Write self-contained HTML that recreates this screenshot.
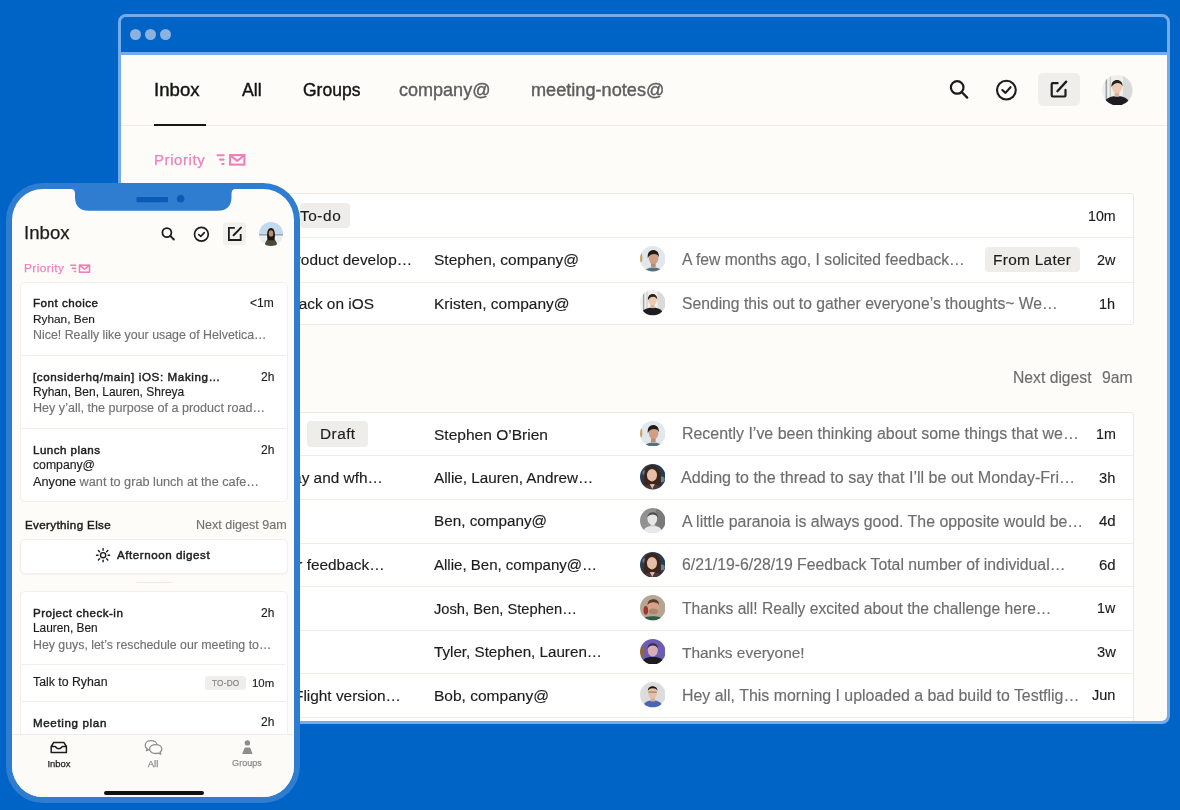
<!DOCTYPE html>
<html><head><meta charset="utf-8">
<style>
*{margin:0;padding:0;box-sizing:border-box}
html,body{width:1180px;height:810px;overflow:hidden;background:#0064c6;font-family:"Liberation Sans",sans-serif;color:#1c1c1c}
.a{position:absolute}
.t{position:absolute;white-space:nowrap;will-change:transform}
</style></head><body>
<div class="a" style="left:118.00px;top:14.00px;width:1052.00px;height:710.00px;border:3px solid #74abea;border-radius:8px;background:#0064c6;"></div>
<div class="a" style="left:121.00px;top:52.00px;width:1046.00px;height:3.00px;background:#74abea;"></div>
<div class="a" style="left:129.50px;top:28.50px;width:11.00px;height:11.00px;border-radius:50%;background:#8db1de;"></div>
<div class="a" style="left:144.50px;top:28.50px;width:11.00px;height:11.00px;border-radius:50%;background:#8db1de;"></div>
<div class="a" style="left:160.00px;top:28.50px;width:11.00px;height:11.00px;border-radius:50%;background:#8db1de;"></div>
<div class="a" style="left:121px;top:55px;width:1046px;height:666px;overflow:hidden;background:#fdfcf9;border-radius:0 0 5px 5px">
<div class="a" style="left:-121px;top:-55px;width:1180px;height:810px">
<div class="t " style="top:79.14px;font-size:18.64px;line-height:22px;left:153.60px;color:#141414;-webkit-text-stroke:0.4px currentColor;">Inbox</div>
<div class="t " style="top:79.96px;font-size:17.73px;line-height:21px;left:242.30px;color:#141414;-webkit-text-stroke:0.4px currentColor;">All</div>
<div class="t " style="top:80.03px;font-size:17.51px;line-height:21px;left:303.30px;color:#141414;-webkit-text-stroke:0.4px currentColor;">Groups</div>
<div class="t " style="top:79.35px;font-size:18.04px;line-height:22px;left:399.30px;color:#5e5e5e;-webkit-text-stroke:0.4px currentColor;">company@</div>
<div class="t " style="top:79.31px;font-size:18.15px;line-height:22px;left:530.60px;color:#5e5e5e;-webkit-text-stroke:0.4px currentColor;">meeting-notes@</div>
<div class="a" style="left:121.00px;top:124.60px;width:1046.00px;height:1.00px;background:#eeeae5;"></div>
<div class="a" style="left:154.00px;top:124.20px;width:52.00px;height:2.10px;background:#161616;"></div>
<div class="a" style="left:1037.50px;top:72.80px;width:42.70px;height:33.60px;background:#efeeeb;border-radius:5px;"></div>
<svg class="a" style="left:940px;top:70px" width="200" height="40" viewBox="940 70 200 40">
<circle cx="957.2" cy="87.4" r="6.3" fill="none" stroke="#1c1c1c" stroke-width="2.2"/>
<line x1="961.9" y1="92.2" x2="967.2" y2="97.6" stroke="#1c1c1c" stroke-width="2.3" stroke-linecap="round"/>
<circle cx="1006.4" cy="90.1" r="9.4" fill="none" stroke="#1c1c1c" stroke-width="2.1"/>
<polyline points="1002.3,90 1005.5,92.9 1010.5,87.2" fill="none" stroke="#1c1c1c" stroke-width="2.1" stroke-linecap="round" stroke-linejoin="round"/>
<path d="M1057.6 83.2 H1052.6 Q1051.7 83.2 1051.7 84.1 V95.6 Q1051.7 96.5 1052.6 96.5 H1064.6 Q1065.5 96.5 1065.5 95.6 V89.9" fill="none" stroke="#1c1c1c" stroke-width="2.2" stroke-linecap="round"/>
<line x1="1057.4" y1="91.2" x2="1066.2" y2="81.6" stroke="#1c1c1c" stroke-width="2.3" stroke-linecap="round"/>
</svg>
<svg class="a" style="left:1102.20px;top:74.50px" width="30.60" height="30.60" viewBox="-12.5 -12.5 25 25"><defs><clipPath id="ac1"><circle r="12.5"/></clipPath><filter id="af1" x="-20%" y="-20%" width="140%" height="140%"><feGaussianBlur stdDeviation="0.5"/></filter></defs><g clip-path="url(#ac1)"><g filter="url(#af1)"><rect x="-13" y="-13" width="26" height="26" fill="#efefed"/>
<rect x="-9.6" y="-13" width="1.3" height="26" fill="#9ca1a1"/><rect x="-6.2" y="-13" width="1" height="26" fill="#c6c9c9"/>
<rect x="4.6" y="-13" width="9" height="26" fill="#d9dbd9"/>
<path d="M-11 12.5 C-11 6.6 -6 4.6 -0.3 4.8 C5.6 4.6 10.2 6.6 10.2 12.5Z" fill="#1d1d21"/>
<rect x="-2.2" y="1.2" width="3.8" height="4" fill="#dcb39b"/>
<ellipse cx="-0.3" cy="-2.9" rx="4.2" ry="5.3" fill="#eecab3"/>
<path d="M-4.7 -2.6 C-5.8 -10.2 4.9 -10.6 4.3 -3 C3.3 -6.9 -2.3 -7.3 -4.7 -2.6Z" fill="#2a211c"/></g></g></svg>
<div class="t " style="top:151.00px;font-size:15px;line-height:18px;left:154.40px;color:#f07fb7;-webkit-text-stroke:0.25px currentColor;letter-spacing:0.566px;">Priority</div>
<svg class="a" style="left:210px;top:148px" width="40" height="22" viewBox="210 148 40 22">
<g stroke="#f07fb7" stroke-width="2.1" fill="none" stroke-linecap="round">
<line x1="217.5" y1="155.3" x2="223.6" y2="155.3"/><line x1="220" y1="159.6" x2="223.6" y2="159.6"/><line x1="222.3" y1="164" x2="223.6" y2="164"/>
<rect x="230.1" y="155.1" width="14.3" height="9.5" stroke-linecap="butt"/>
<polyline points="230.4,155.5 237.25,160.8 244.1,155.5" stroke-linejoin="round"/>
</g></svg>
<div class="a" style="left:250.00px;top:192.70px;width:883.50px;height:132.60px;background:#fff;border:1px solid #ebe8e3;border-radius:3px;"></div>
<div class="a" style="left:250.00px;top:237.10px;width:883.50px;height:1.00px;background:#efece7;"></div>
<div class="a" style="left:250.00px;top:281.50px;width:883.50px;height:1.00px;background:#efece7;"></div>
<div class="a" style="left:300.00px;top:203.00px;width:50.30px;height:24.60px;background:#eeedea;border-radius:4px;"></div>
<div class="t " style="top:206.91px;font-size:15.4px;line-height:18px;right:839.00px;text-align:right;color:#1c1c1c;-webkit-text-stroke:0.15px currentColor;letter-spacing:0.556px;">To-do</div>
<div class="t " style="top:207.83px;font-size:14.19px;line-height:17px;right:64.40px;text-align:right;color:#1c1c1c;-webkit-text-stroke:0.15px currentColor;">10m</div>
<div class="t " style="top:250.81px;font-size:15.4px;line-height:18px;right:768.00px;text-align:right;color:#1c1c1c;-webkit-text-stroke:0.15px currentColor;">Considerations for product develop…</div>
<div class="t " style="top:250.28px;font-size:15.5px;line-height:19px;left:434.30px;color:#1c1c1c;-webkit-text-stroke:0.15px currentColor;">Stephen, company@</div>
<svg class="a" style="left:639.80px;top:246.45px" width="25.60" height="25.60" viewBox="-12.5 -12.5 25 25"><defs><clipPath id="ac2"><circle r="12.5"/></clipPath><filter id="af2" x="-20%" y="-20%" width="140%" height="140%"><feGaussianBlur stdDeviation="0.75"/></filter></defs><g clip-path="url(#ac2)"><g filter="url(#af2)"><rect x="-13" y="-13" width="26" height="26" fill="#e2e7ed"/>
<ellipse cx="-11.6" cy="-1" rx="1.4" ry="4.5" fill="#c4a560"/>
<ellipse cx="0.5" cy="12.6" rx="8.5" ry="4" fill="#55707c"/>
<rect x="-1.8" y="2.5" width="4.6" height="5.5" fill="#bf8c70"/>
<ellipse cx="0.8" cy="-0.6" rx="4.6" ry="5.8" fill="#cf9e83"/>
<path d="M-4.8 -0.5 C-6.8 -11 6.8 -11.5 6 -1.5 C5.2 -5.6 -3 -6.2 -4.8 -0.5Z" fill="#231b17"/></g></g></svg>
<div class="t " style="top:250.21px;font-size:15.71px;line-height:19px;left:682.30px;color:#6d6d6d;-webkit-text-stroke:0.15px currentColor;">A few months ago, I solicited feedback…</div>
<div class="t " style="top:251.66px;font-size:14.4px;line-height:17px;right:64.40px;text-align:right;color:#1c1c1c;-webkit-text-stroke:0.15px currentColor;">2w</div>
<div class="a" style="left:985.00px;top:246.70px;width:95.00px;height:25.10px;background:#eeedea;border-radius:4px;"></div>
<div class="t " style="top:250.81px;font-size:15.4px;line-height:18px;left:993.10px;color:#1c1c1c;-webkit-text-stroke:0.15px currentColor;letter-spacing:0.300px;">From Later</div>
<div class="t " style="top:294.71px;font-size:15.4px;line-height:18px;right:806.40px;text-align:right;color:#1c1c1c;-webkit-text-stroke:0.15px currentColor;">Feedback on iOS</div>
<div class="t " style="top:294.18px;font-size:15.51px;line-height:19px;left:434.30px;color:#1c1c1c;-webkit-text-stroke:0.15px currentColor;">Kristen, company@</div>
<svg class="a" style="left:639.80px;top:290.35px" width="25.60" height="25.60" viewBox="-12.5 -12.5 25 25"><defs><clipPath id="ac3"><circle r="12.5"/></clipPath><filter id="af3" x="-20%" y="-20%" width="140%" height="140%"><feGaussianBlur stdDeviation="0.75"/></filter></defs><g clip-path="url(#ac3)"><g filter="url(#af3)"><rect x="-13" y="-13" width="26" height="26" fill="#efefed"/>
<rect x="-9.6" y="-13" width="1.3" height="26" fill="#9ca1a1"/><rect x="-6.2" y="-13" width="1" height="26" fill="#c6c9c9"/>
<rect x="4.6" y="-13" width="9" height="26" fill="#d9dbd9"/>
<path d="M-11 12.5 C-11 6.6 -6 4.6 -0.3 4.8 C5.6 4.6 10.2 6.6 10.2 12.5Z" fill="#1d1d21"/>
<rect x="-2.2" y="1.2" width="3.8" height="4" fill="#dcb39b"/>
<ellipse cx="-0.3" cy="-2.9" rx="4.2" ry="5.3" fill="#eecab3"/>
<path d="M-4.7 -2.6 C-5.8 -10.2 4.9 -10.6 4.3 -3 C3.3 -6.9 -2.3 -7.3 -4.7 -2.6Z" fill="#2a211c"/></g></g></svg>
<div class="t " style="top:294.11px;font-size:15.7px;line-height:19px;left:682.30px;color:#6d6d6d;-webkit-text-stroke:0.15px currentColor;">Sending this out to gather everyone’s thoughts~ We…</div>
<div class="t " style="top:295.53px;font-size:14.5px;line-height:17px;right:64.40px;text-align:right;color:#1c1c1c;-webkit-text-stroke:0.15px currentColor;">1h</div>
<div class="t " style="top:368.26px;font-size:15.71px;line-height:19px;left:1012.80px;color:#6d6d6d;-webkit-text-stroke:0.15px currentColor;">Next digest</div>
<div class="t " style="top:368.25px;font-size:15.73px;line-height:19px;right:47.80px;text-align:right;color:#6d6d6d;-webkit-text-stroke:0.15px currentColor;">9am</div>
<div class="a" style="left:250.00px;top:411.70px;width:883.50px;height:349.80px;background:#fff;border:1px solid #ebe8e3;border-radius:3px;"></div>
<div class="a" style="left:250.00px;top:455.30px;width:883.50px;height:1.00px;background:#efece7;"></div>
<div class="a" style="left:250.00px;top:498.90px;width:883.50px;height:1.00px;background:#efece7;"></div>
<div class="a" style="left:250.00px;top:542.50px;width:883.50px;height:1.00px;background:#efece7;"></div>
<div class="a" style="left:250.00px;top:586.10px;width:883.50px;height:1.00px;background:#efece7;"></div>
<div class="a" style="left:250.00px;top:629.70px;width:883.50px;height:1.00px;background:#efece7;"></div>
<div class="a" style="left:250.00px;top:673.30px;width:883.50px;height:1.00px;background:#efece7;"></div>
<div class="a" style="left:250.00px;top:716.90px;width:883.50px;height:1.00px;background:#efece7;"></div>
<div class="a" style="left:307.00px;top:421.40px;width:61.00px;height:25.40px;background:#eeedea;border-radius:4px;"></div>
<div class="t " style="top:425.06px;font-size:15.4px;line-height:18px;left:319.70px;color:#1c1c1c;-webkit-text-stroke:0.15px currentColor;letter-spacing:0.446px;">Draft</div>
<div class="t " style="top:424.52px;font-size:15.54px;line-height:19px;left:434.30px;color:#1c1c1c;-webkit-text-stroke:0.15px currentColor;">Stephen O’Brien</div>
<svg class="a" style="left:639.80px;top:420.70px" width="25.60" height="25.60" viewBox="-12.5 -12.5 25 25"><defs><clipPath id="ac4"><circle r="12.5"/></clipPath><filter id="af4" x="-20%" y="-20%" width="140%" height="140%"><feGaussianBlur stdDeviation="0.75"/></filter></defs><g clip-path="url(#ac4)"><g filter="url(#af4)"><rect x="-13" y="-13" width="26" height="26" fill="#e2e7ed"/>
<ellipse cx="-11.6" cy="-1" rx="1.4" ry="4.5" fill="#c4a560"/>
<ellipse cx="0.5" cy="12.6" rx="8.5" ry="4" fill="#55707c"/>
<rect x="-1.8" y="2.5" width="4.6" height="5.5" fill="#bf8c70"/>
<ellipse cx="0.8" cy="-0.6" rx="4.6" ry="5.8" fill="#cf9e83"/>
<path d="M-4.8 -0.5 C-6.8 -11 6.8 -11.5 6 -1.5 C5.2 -5.6 -3 -6.2 -4.8 -0.5Z" fill="#231b17"/></g></g></svg>
<div class="t " style="top:424.37px;font-size:15.95px;line-height:19px;left:682.30px;color:#6d6d6d;-webkit-text-stroke:0.15px currentColor;">Recently I’ve been thinking about some things that we…</div>
<div class="t " style="top:425.95px;font-size:14.3px;line-height:17px;right:64.40px;text-align:right;color:#1c1c1c;-webkit-text-stroke:0.15px currentColor;">1m</div>
<div class="t " style="top:468.66px;font-size:15.4px;line-height:18px;right:797.00px;text-align:right;color:#1c1c1c;-webkit-text-stroke:0.15px currentColor;">Holiday and wfh…</div>
<div class="t " style="top:468.72px;font-size:15.24px;line-height:18px;left:434.30px;color:#1c1c1c;-webkit-text-stroke:0.15px currentColor;">Allie, Lauren, Andrew…</div>
<svg class="a" style="left:639.80px;top:464.30px" width="25.60" height="25.60" viewBox="-12.5 -12.5 25 25"><defs><clipPath id="ac5"><circle r="12.5"/></clipPath><filter id="af5" x="-20%" y="-20%" width="140%" height="140%"><feGaussianBlur stdDeviation="0.75"/></filter></defs><g clip-path="url(#ac5)"><g filter="url(#af5)"><rect x="-13" y="-13" width="26" height="26" fill="#2a3b50"/>
<circle cx="-8" cy="-4" r="2.4" fill="#5a7591"/><circle cx="8.8" cy="2.5" r="2.8" fill="#6584a4"/>
<path d="M-8 10 C-10 -2 -8 -11.5 -0.5 -11.5 C7 -11.5 9 -2 7.5 10Z" fill="#3b261a"/>
<path d="M-10 12.5 C-9 8.5 -6 7.5 -0.5 7.5 C5 7.5 8.5 8.5 9.5 12.5Z" fill="#4b3641"/>
<path d="M-3 7 L-0.5 12 L2 7Z" fill="#dcb49a"/>
<ellipse cx="-0.8" cy="-1.6" rx="4.9" ry="6.1" fill="#e6bea6"/></g></g></svg>
<div class="t " style="top:467.93px;font-size:16.08px;line-height:19px;left:680.70px;color:#6d6d6d;-webkit-text-stroke:0.15px currentColor;">Adding to the thread to say that I’ll be out Monday-Fri…</div>
<div class="t " style="top:468.92px;font-size:14.66px;line-height:18px;right:64.40px;text-align:right;color:#1c1c1c;-webkit-text-stroke:0.15px currentColor;">3h</div>
<div class="t " style="top:512.31px;font-size:15.28px;line-height:18px;left:434.30px;color:#1c1c1c;-webkit-text-stroke:0.15px currentColor;">Ben, company@</div>
<svg class="a" style="left:639.80px;top:507.90px" width="25.60" height="25.60" viewBox="-12.5 -12.5 25 25"><defs><clipPath id="ac6"><circle r="12.5"/></clipPath><filter id="af6" x="-20%" y="-20%" width="140%" height="140%"><feGaussianBlur stdDeviation="0.75"/></filter></defs><g clip-path="url(#ac6)"><g filter="url(#af6)"><rect x="-13" y="-13" width="26" height="26" fill="#929292"/>
<rect x="3" y="-13" width="10" height="26" fill="#7a7a7a"/>
<path d="M-10 12.5 C-9 6.5 -5 5 0 5 C5 5 9 6.5 10 12.5Z" fill="#e8e8e8"/>
<rect x="-2.2" y="1" width="4" height="5" fill="#d5d5d5"/>
<ellipse cx="-0.5" cy="-2.2" rx="4.8" ry="6" fill="#e6e6e6"/>
<path d="M-5.2 -3.5 C-5.4 -10.2 5.6 -10.2 5 -3 C3.2 -7 -3 -7.2 -5.2 -3.5Z" fill="#4e4e4e"/></g></g></svg>
<div class="t " style="top:511.59px;font-size:15.89px;line-height:19px;left:682.30px;color:#6d6d6d;-webkit-text-stroke:0.15px currentColor;">A little paranoia is always good. The opposite would be…</div>
<div class="t " style="top:512.40px;font-size:15.0px;line-height:18px;right:64.40px;text-align:right;color:#1c1c1c;-webkit-text-stroke:0.15px currentColor;">4d</div>
<div class="t " style="top:555.86px;font-size:15.4px;line-height:18px;right:795.30px;text-align:right;color:#1c1c1c;-webkit-text-stroke:0.15px currentColor;">Weekly user feedback…</div>
<div class="t " style="top:555.99px;font-size:15.04px;line-height:18px;left:434.30px;color:#1c1c1c;-webkit-text-stroke:0.15px currentColor;">Allie, Ben, company@…</div>
<svg class="a" style="left:639.80px;top:551.50px" width="25.60" height="25.60" viewBox="-12.5 -12.5 25 25"><defs><clipPath id="ac7"><circle r="12.5"/></clipPath><filter id="af7" x="-20%" y="-20%" width="140%" height="140%"><feGaussianBlur stdDeviation="0.75"/></filter></defs><g clip-path="url(#ac7)"><g filter="url(#af7)"><rect x="-13" y="-13" width="26" height="26" fill="#2a3b50"/>
<circle cx="-8" cy="-4" r="2.4" fill="#5a7591"/><circle cx="8.8" cy="2.5" r="2.8" fill="#6584a4"/>
<path d="M-8 10 C-10 -2 -8 -11.5 -0.5 -11.5 C7 -11.5 9 -2 7.5 10Z" fill="#3b261a"/>
<path d="M-10 12.5 C-9 8.5 -6 7.5 -0.5 7.5 C5 7.5 8.5 8.5 9.5 12.5Z" fill="#4b3641"/>
<path d="M-3 7 L-0.5 12 L2 7Z" fill="#dcb49a"/>
<ellipse cx="-0.8" cy="-1.6" rx="4.9" ry="6.1" fill="#e6bea6"/></g></g></svg>
<div class="t " style="top:555.22px;font-size:15.81px;line-height:19px;left:682.30px;color:#6d6d6d;-webkit-text-stroke:0.15px currentColor;">6/21/19-6/28/19 Feedback Total number of individual…</div>
<div class="t " style="top:556.00px;font-size:15.0px;line-height:18px;right:64.40px;text-align:right;color:#1c1c1c;-webkit-text-stroke:0.15px currentColor;">6d</div>
<div class="t " style="top:599.71px;font-size:14.69px;line-height:18px;left:434.30px;color:#1c1c1c;-webkit-text-stroke:0.15px currentColor;">Josh, Ben, Stephen…</div>
<svg class="a" style="left:639.80px;top:595.10px" width="25.60" height="25.60" viewBox="-12.5 -12.5 25 25"><defs><clipPath id="ac8"><circle r="12.5"/></clipPath><filter id="af8" x="-20%" y="-20%" width="140%" height="140%"><feGaussianBlur stdDeviation="0.75"/></filter></defs><g clip-path="url(#ac8)"><g filter="url(#af8)"><rect x="-13" y="-13" width="26" height="26" fill="#b6a593"/>
<ellipse cx="-6.8" cy="2.5" rx="2.2" ry="4.2" fill="#a3302a"/>
<path d="M-10 12.5 C-9 9 -5 8.2 0 8.2 C5 8.2 9 9 10 12.5Z" fill="#2c5c46"/>
<ellipse cx="0.6" cy="-0.5" rx="5.4" ry="6.8" fill="#d8a188"/>
<ellipse cx="0.6" cy="3.4" rx="4.4" ry="2.8" fill="#ab876a"/>
<path d="M-5 -2.5 C-6.2 -10.2 6.8 -10.5 6 -2.8 C5 -6.4 -4 -6.6 -5 -2.5Z" fill="#5a3826"/></g></g></svg>
<div class="t " style="top:598.88px;font-size:15.65px;line-height:19px;left:682.30px;color:#6d6d6d;-webkit-text-stroke:0.15px currentColor;">Thanks all! Really excited about the challenge here…</div>
<div class="t " style="top:600.38px;font-size:14.2px;line-height:17px;right:64.40px;text-align:right;color:#1c1c1c;-webkit-text-stroke:0.15px currentColor;">1w</div>
<div class="t " style="top:643.14px;font-size:15.19px;line-height:18px;left:434.30px;color:#1c1c1c;-webkit-text-stroke:0.15px currentColor;">Tyler, Stephen, Lauren…</div>
<svg class="a" style="left:639.80px;top:638.70px" width="25.60" height="25.60" viewBox="-12.5 -12.5 25 25"><defs><clipPath id="ac9"><circle r="12.5"/></clipPath><filter id="af9" x="-20%" y="-20%" width="140%" height="140%"><feGaussianBlur stdDeviation="0.75"/></filter></defs><g clip-path="url(#ac9)"><g filter="url(#af9)"><rect x="-13" y="-13" width="26" height="26" fill="#6d5cb3"/>
<ellipse cx="-10.5" cy="-0.5" rx="2.4" ry="5.5" fill="#8e6442"/>
<path d="M-11 12.5 C-10 6 -6 5 0 5 C6 5 10 6 11 12.5Z" fill="#1d1a1a"/>
<ellipse cx="0" cy="-1.5" rx="4.9" ry="6.1" fill="#d5aeb8"/>
<path d="M-5 -3.2 C-5.8 -10.2 5.8 -10.2 5 -3.2 C3 -7 -3 -7 -5 -3.2Z" fill="#3a2b44"/></g></g></svg>
<div class="t " style="top:642.55px;font-size:15.43px;line-height:19px;left:682.30px;color:#6d6d6d;-webkit-text-stroke:0.15px currentColor;">Thanks everyone!</div>
<div class="t " style="top:643.31px;font-size:14.7px;line-height:18px;right:64.40px;text-align:right;color:#1c1c1c;-webkit-text-stroke:0.15px currentColor;">3w</div>
<div class="t " style="top:686.66px;font-size:15.4px;line-height:18px;right:778.70px;text-align:right;color:#1c1c1c;-webkit-text-stroke:0.15px currentColor;">New TestFlight version…</div>
<div class="t " style="top:686.12px;font-size:15.53px;line-height:19px;left:434.30px;color:#1c1c1c;-webkit-text-stroke:0.15px currentColor;">Bob, company@</div>
<svg class="a" style="left:639.80px;top:682.30px" width="25.60" height="25.60" viewBox="-12.5 -12.5 25 25"><defs><clipPath id="ac10"><circle r="12.5"/></clipPath><filter id="af10" x="-20%" y="-20%" width="140%" height="140%"><feGaussianBlur stdDeviation="0.75"/></filter></defs><g clip-path="url(#ac10)"><g filter="url(#af10)"><rect x="-13" y="-13" width="26" height="26" fill="#dcdcdc"/>
<path d="M-10 12.5 C-9 7 -5 5.5 0 5.5 C5 5.5 9 7 10 12.5Z" fill="#4a66b4"/>
<rect x="-2" y="1.5" width="4" height="5" fill="#d6b09a"/>
<ellipse cx="-0.2" cy="-2" rx="4.3" ry="5.6" fill="#e3c0a6"/>
<rect x="-4.2" y="-3.2" width="8" height="1.1" fill="#7a5a4a" opacity=".7"/>
<path d="M-4.8 -4 C-5 -9.8 4.6 -9.8 4.6 -4 C3 -7.2 -3 -7.2 -4.8 -4Z" fill="#1d1717"/></g></g></svg>
<div class="t " style="top:685.99px;font-size:15.91px;line-height:19px;left:682.30px;color:#6d6d6d;-webkit-text-stroke:0.15px currentColor;">Hey all, This morning I uploaded a bad build to Testflig…</div>
<div class="t " style="top:687.47px;font-size:14.51px;line-height:17px;right:64.40px;text-align:right;color:#1c1c1c;-webkit-text-stroke:0.15px currentColor;">Jun</div>
</div></div>
<div class="a" style="left:6.00px;top:183.00px;width:294.00px;height:619.60px;background:#2e7dd0;border-radius:37px;"></div>
<div class="a" style="left:12px;top:188.8px;width:282.3px;height:607.8px;border-radius:31px;overflow:hidden;background:#fdfcf9">
<div class="a" style="left:-12px;top:-188.8px;width:1180px;height:810px">
<svg class="a" style="left:60px;top:180px" width="190" height="40" viewBox="60 180 190 40">
<path d="M70 180 V188.8 Q75 188.8 75 193.8 V197 Q75 210.8 89 210.8 H217.5 Q231.5 210.8 231.5 197 V193.8 Q231.5 188.8 236.5 188.8 V180Z" fill="#2e7dd0"/>
<rect x="136.5" y="196.9" width="31.5" height="5.3" rx="1" fill="#0b5bb4"/>
<circle cx="180.6" cy="198.8" r="3.8" fill="#0b5bb4"/>
</svg>
<div class="t " style="top:221.84px;font-size:18.64px;line-height:22px;left:24.30px;color:#1c1c1c;-webkit-text-stroke:0.25px currentColor;">Inbox</div>
<svg class="a" style="left:150px;top:215px" width="150" height="40" viewBox="150 215 150 40">
<circle cx="166.9" cy="232.6" r="4.5" fill="none" stroke="#1c1c1c" stroke-width="1.8"/>
<line x1="170.2" y1="235.9" x2="173.9" y2="239.5" stroke="#1c1c1c" stroke-width="1.9" stroke-linecap="round"/>
<circle cx="201.4" cy="234.2" r="6.9" fill="none" stroke="#1c1c1c" stroke-width="1.7"/>
<polyline points="198.7,234.5 200.8,236.4 204.3,232.6" fill="none" stroke="#1c1c1c" stroke-width="1.6" stroke-linecap="round" stroke-linejoin="round"/>
<rect x="223" y="222.3" width="23" height="23" rx="4" fill="#f1f0ed"/>
<path d="M234.8 227.9 H228.9 V240 H240.7 V234" fill="none" stroke="#1c1c1c" stroke-width="1.8"/>
<line x1="233.6" y1="235.2" x2="241" y2="227.6" stroke="#1c1c1c" stroke-width="2" stroke-linecap="round"/>
</svg>
<svg class="a" style="left:259.00px;top:221.90px" width="24.00" height="24.00" viewBox="-12.5 -12.5 25 25"><defs><clipPath id="ac11"><circle r="12.5"/></clipPath><filter id="af11" x="-20%" y="-20%" width="140%" height="140%"><feGaussianBlur stdDeviation="0.75"/></filter></defs><g clip-path="url(#ac11)"><g filter="url(#af11)"><rect x="-13" y="-13" width="26" height="14" fill="#c3daee"/>
<rect x="-13" y="0.2" width="26" height="1.6" fill="#8f9ca4"/>
<rect x="-13" y="1.8" width="26" height="12" fill="#e9eef1"/>
<path d="M-6.5 12.5 C-6 6.5 -3.5 5 0 5 C3.5 5 6 6.5 6.5 12.5Z" fill="#4d4736"/>
<path d="M-3.6 6.5 C-4.8 -1 -3.8 -6.2 0 -6.2 C3.8 -6.2 4.8 -1 3.6 6.5Z" fill="#1c1512"/>
<ellipse cx="0" cy="-0.6" rx="2.4" ry="3.3" fill="#b98d72"/></g></g></svg>
<div class="t " style="top:261.11px;font-size:11.8px;line-height:14px;left:24.40px;color:#f07fb7;-webkit-text-stroke:0.25px currentColor;letter-spacing:0.461px;">Priority</div>
<svg class="a" style="left:66px;top:260px" width="30" height="18" viewBox="66 260 30 18">
<g stroke="#f07fb7" stroke-width="1.6" fill="none" stroke-linecap="round">
<line x1="70.7" y1="265.3" x2="75.6" y2="265.3"/><line x1="72.5" y1="268.4" x2="75.6" y2="268.4"/><line x1="74.4" y1="271.5" x2="75.6" y2="271.5"/>
<rect x="79.5" y="265.2" width="10" height="7" stroke-linecap="butt"/>
<polyline points="79.8,265.5 84.5,269.2 89.2,265.5" stroke-linejoin="round"/>
</g></svg>
<div class="a" style="left:20.20px;top:282.00px;width:267.60px;height:220.00px;background:#fff;border:1px solid #f1efeb;border-radius:5px;"></div>
<div class="a" style="left:21.70px;top:355.40px;width:264.70px;height:1.00px;background:#f1eeea;"></div>
<div class="a" style="left:21.70px;top:428.40px;width:264.70px;height:1.00px;background:#f1eeea;"></div>
<div class="t " style="top:296.38px;font-size:11.6px;line-height:14px;left:33.00px;color:#1c1c1c;-webkit-text-stroke:0.45px currentColor;letter-spacing:0.504px;">Font choice</div>
<div class="t " style="top:296.24px;font-size:12px;line-height:14px;right:906.00px;text-align:right;color:#1c1c1c;-webkit-text-stroke:0.15px currentColor;">&lt;1m</div>
<div class="t " style="top:312.00px;font-size:11.83px;line-height:14px;left:33.00px;color:#1c1c1c;-webkit-text-stroke:0.15px currentColor;">Ryhan, Ben</div>
<div class="t " style="top:328.10px;font-size:12.4px;line-height:15px;left:33.00px;color:#727272;-webkit-text-stroke:0.15px currentColor;">Nice! Really like your usage of Helvetica…</div>
<div class="t " style="top:369.78px;font-size:11.6px;line-height:14px;left:33.00px;color:#1c1c1c;-webkit-text-stroke:0.45px currentColor;letter-spacing:0.612px;">[considerhq/main] iOS: Making…</div>
<div class="t " style="top:369.64px;font-size:12px;line-height:14px;right:906.00px;text-align:right;color:#1c1c1c;-webkit-text-stroke:0.15px currentColor;">2h</div>
<div class="t " style="top:385.35px;font-size:11.99px;line-height:14px;left:33.00px;color:#1c1c1c;-webkit-text-stroke:0.15px currentColor;">Ryhan, Ben, Lauren, Shreya</div>
<div class="t " style="top:401.44px;font-size:12.59px;line-height:15px;left:33.00px;color:#727272;-webkit-text-stroke:0.15px currentColor;">Hey y’all, the purpose of a product road…</div>
<div class="t " style="top:442.78px;font-size:11.6px;line-height:14px;left:33.00px;color:#1c1c1c;-webkit-text-stroke:0.45px currentColor;letter-spacing:0.450px;">Lunch plans</div>
<div class="t " style="top:442.64px;font-size:12px;line-height:14px;right:906.00px;text-align:right;color:#1c1c1c;-webkit-text-stroke:0.15px currentColor;">2h</div>
<div class="t " style="top:457.77px;font-size:12.22px;line-height:15px;left:33.00px;color:#1c1c1c;-webkit-text-stroke:0.15px currentColor;">company@</div>
<div class="t " style="top:474.40px;font-size:12.71px;line-height:15px;left:33.00px;color:#727272;-webkit-text-stroke:0.15px currentColor;"><span style="color:#1c1c1c">Anyone</span> want to grab lunch at the cafe…</div>
<div class="t " style="top:518.28px;font-size:11.6px;line-height:14px;left:24.80px;color:#1c1c1c;-webkit-text-stroke:0.45px currentColor;letter-spacing:0.367px;">Everything Else</div>
<div class="t " style="top:518.15px;font-size:12.55px;line-height:15px;right:893.00px;text-align:right;color:#727272;-webkit-text-stroke:0.15px currentColor;">Next digest 9am</div>
<div class="a" style="left:20.20px;top:538.60px;width:267.60px;height:35.50px;background:#fff;border:1px solid #f1efeb;border-radius:5px;box-shadow:0 1px 2px rgba(0,0,0,0.04);"></div>
<svg class="a" style="left:93px;top:545px" width="20" height="20" viewBox="93 545 20 20">
<g stroke="#1c1c1c" stroke-width="1.4" fill="none" stroke-linecap="round">
<circle cx="103.1" cy="555.2" r="2.6"/>
<line x1="103.1" y1="548.6" x2="103.1" y2="550.2"/><line x1="103.1" y1="560.2" x2="103.1" y2="561.8"/>
<line x1="96.5" y1="555.2" x2="98.1" y2="555.2"/><line x1="108.1" y1="555.2" x2="109.7" y2="555.2"/>
<line x1="98.4" y1="550.5" x2="99.6" y2="551.7"/><line x1="106.6" y1="558.7" x2="107.8" y2="559.9"/>
<line x1="98.4" y1="559.9" x2="99.6" y2="558.7"/><line x1="106.6" y1="551.7" x2="107.8" y2="550.5"/>
</g></svg>
<div class="t " style="top:548.38px;font-size:11.6px;line-height:14px;left:117.00px;color:#1c1c1c;-webkit-text-stroke:0.45px currentColor;letter-spacing:0.545px;">Afternoon digest</div>
<div class="a" style="left:136.00px;top:582.00px;width:36.00px;height:1.30px;background:#efe7e3;border-radius:1px;"></div>
<div class="a" style="left:20.20px;top:590.80px;width:267.60px;height:169.20px;background:#fff;border:1px solid #f1efeb;border-radius:5px;"></div>
<div class="a" style="left:21.70px;top:664.10px;width:264.70px;height:1.00px;background:#f1eeea;"></div>
<div class="a" style="left:21.70px;top:701.30px;width:264.70px;height:1.00px;background:#f1eeea;"></div>
<div class="t " style="top:605.88px;font-size:11.6px;line-height:14px;left:33.00px;color:#1c1c1c;-webkit-text-stroke:0.45px currentColor;letter-spacing:0.493px;">Project check-in</div>
<div class="t " style="top:605.74px;font-size:12px;line-height:14px;right:906.00px;text-align:right;color:#1c1c1c;-webkit-text-stroke:0.15px currentColor;">2h</div>
<div class="t " style="top:621.48px;font-size:11.89px;line-height:14px;left:33.00px;color:#1c1c1c;-webkit-text-stroke:0.15px currentColor;">Lauren, Ben</div>
<div class="t " style="top:637.63px;font-size:12.33px;line-height:15px;left:33.00px;color:#727272;-webkit-text-stroke:0.15px currentColor;">Hey guys, let’s reschedule our meeting to…</div>
<div class="t " style="top:674.83px;font-size:12.31px;line-height:15px;left:33.00px;color:#1c1c1c;-webkit-text-stroke:0.15px currentColor;">Talk to Ryhan</div>
<div class="a" style="left:205.00px;top:676.10px;width:41.20px;height:14.30px;background:#efeeec;border-radius:3px;"></div>
<div class="t " style="top:678.56px;font-size:8.2px;line-height:10px;left:211.80px;color:#8a8a8a;-webkit-text-stroke:0.25px currentColor;letter-spacing:0.226px;">TO-DO</div>
<div class="t " style="top:675.65px;font-size:11.4px;line-height:14px;right:906.00px;text-align:right;color:#1c1c1c;-webkit-text-stroke:0.15px currentColor;">10m</div>
<div class="t " style="top:715.58px;font-size:11.6px;line-height:14px;left:33.00px;color:#1c1c1c;-webkit-text-stroke:0.45px currentColor;letter-spacing:0.632px;">Meeting plan</div>
<div class="t " style="top:715.44px;font-size:12px;line-height:14px;right:906.00px;text-align:right;color:#1c1c1c;-webkit-text-stroke:0.15px currentColor;">2h</div>
<div class="a" style="left:12.00px;top:734.00px;width:282.30px;height:63.00px;background:#fcfbf8;border-top:1px solid #efece6;"></div>
<svg class="a" style="left:40px;top:736px" width="230" height="22" viewBox="40 736 230 22">
<path d="M51.2 746.5 L53.6 742.6 H64 L66.4 746.5 V752.6 H51.2Z M51.2 746.5 H55.2 Q58.8 751 62.4 746.5 H66.4" fill="none" stroke="#1c1c1c" stroke-width="1.5" stroke-linejoin="round"/>
<g stroke="#8d8d8d" stroke-width="1.3" stroke-linejoin="round" stroke-linecap="round">
<path d="M151 740.6 C154.5 740.6 157 742.6 157 745.4 C157 748.2 154.5 750 151 750 C150 750 149.3 749.9 148.6 749.6 L146.4 750.8 L147.2 748.6 C145.9 747.7 145.2 746.6 145.2 745.4 C145.2 742.6 147.7 740.6 151 740.6Z" fill="none"/>
<path d="M155.7 744.6 C159.1 744.6 161.8 746.5 161.8 749 C161.8 750.3 161.2 751.3 160.2 752.1 L160.8 754.2 L158.4 753.1 C157.6 753.4 156.7 753.5 155.7 753.5 C152.3 753.5 149.6 751.5 149.6 749 C149.6 746.5 152.3 744.6 155.7 744.6Z" fill="#fcfbf8"/>
</g>
<circle cx="247.4" cy="742.9" r="2.7" fill="#8d8d8d"/>
<path d="M242.2 754 L244.3 748.6 Q244.7 747.6 245.8 747.6 H249 Q250.1 747.6 250.5 748.6 L252.6 754Z" fill="#8d8d8d"/>
</svg>
<div class="t " style="top:757.83px;font-size:9.44px;line-height:11px;left:59.00px;color:#1c1c1c;-webkit-text-stroke:0.25px currentColor;transform:translateX(-50%);">Inbox</div>
<div class="t " style="top:757.83px;font-size:9.45px;line-height:11px;left:153.40px;color:#8d8d8d;-webkit-text-stroke:0.25px currentColor;transform:translateX(-50%);">All</div>
<div class="t " style="top:757.95px;font-size:9.09px;line-height:11px;left:247.40px;color:#8d8d8d;-webkit-text-stroke:0.25px currentColor;transform:translateX(-50%);">Groups</div>
<div class="a" style="left:103.50px;top:790.60px;width:100.00px;height:4.20px;background:#111;border-radius:3px;"></div>
</div></div>
</body></html>
